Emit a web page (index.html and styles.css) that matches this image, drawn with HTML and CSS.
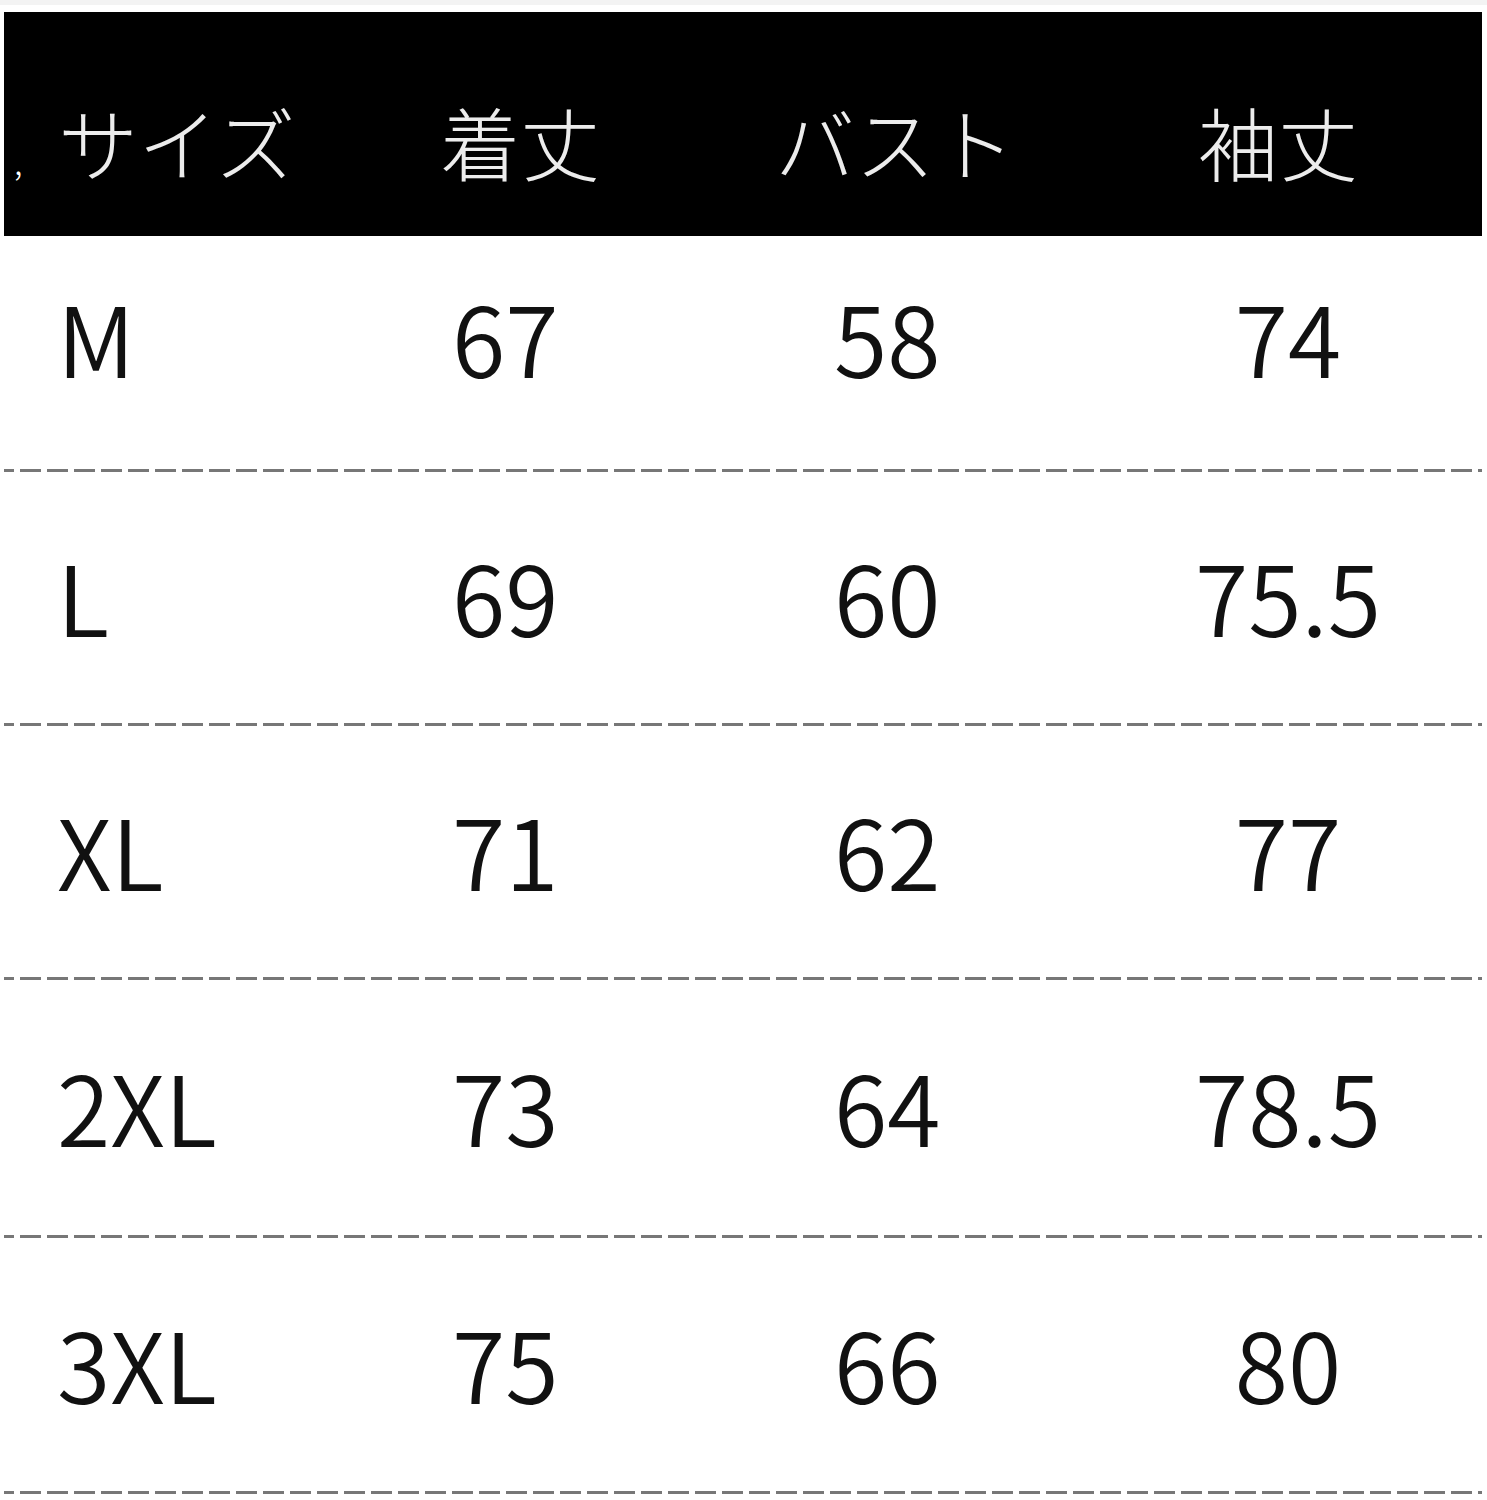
FILE: index.html
```html
<!DOCTYPE html>
<html lang="ja">
<head>
<meta charset="utf-8">
<title>サイズ表</title>
<link rel="stylesheet" href="styles.css">
</head>
<body>
<div class="page">
  <div class="sheet">
    <div class="head">
      <div class="hcell hcell-size"><span class="mark">,</span>サイズ</div>
      <div class="hcell">着丈</div>
      <div class="hcell">バスト</div>
      <div class="hcell">袖丈</div>
    </div>
    <div class="row row-1">
      <div class="cell">M</div><div class="cell">67</div><div class="cell">58</div><div class="cell cell-c">74</div>
    </div>
    <div class="row row-2">
      <div class="cell">L</div><div class="cell">69</div><div class="cell">60</div><div class="cell cell-c">75.5</div>
    </div>
    <div class="row row-3">
      <div class="cell">XL</div><div class="cell">71</div><div class="cell">62</div><div class="cell cell-c">77</div>
    </div>
    <div class="row row-4">
      <div class="cell">2XL</div><div class="cell">73</div><div class="cell">64</div><div class="cell cell-c">78.5</div>
    </div>
    <div class="row row-5">
      <div class="cell">3XL</div><div class="cell">75</div><div class="cell">66</div><div class="cell cell-c">80</div>
    </div>
  </div>
</div>
</body>
</html>
```

FILE: styles.css
```css
html, body {
  margin: 0;
  padding: 0;
  background: #ffffff;
}

body {
  font-family: "Noto Sans CJK JP", "Noto Sans", sans-serif;
  color: #111111;
}

.page {
  border-top: 5px solid #f3f3f3;
  padding: 7px 5px 0 4px;
}

.sheet {
  width: 1478px;
  display: flex;
  flex-direction: column;
}

.head {
  height: 224px;
  background: #000000;
  display: grid;
  grid-template-columns: 426px 335px 423px 1fr;
  align-items: center;
  padding-left: 10px;
  padding-top: 32px;
  box-sizing: border-box;
}

.hcell {
  font-size: 80px;
  line-height: 1;
  color: #ececec;
  font-weight: 300;
  white-space: nowrap;
}

.mark {
  display: inline-block;
  width: 44px;
  font-size: 34px;
  color: #ffffff;
}

.row {
  display: grid;
  grid-template-columns: 395px 382px 261px 386px;
  padding-left: 53px;
  box-sizing: border-box;
  align-items: center;
  height: 256px;
  padding-bottom: 10px;
  background-image: repeating-linear-gradient(to right, #777777 0 10px, transparent 10px 16px, #777777 16px 27px);
  background-size: 100% 3px;
  background-position: 0 100%;
  background-repeat: no-repeat;
}

.row-1 {
  height: 236px;
  padding-bottom: 38px;
}

.row-2,
.row-3 {
  height: 254px;
}

.row-4 {
  height: 258px;
}

.cell {
  font-size: 97px;
  line-height: 1;
  font-weight: 350;
  white-space: nowrap;
}

.cell-c {
  text-align: center;
}
```
